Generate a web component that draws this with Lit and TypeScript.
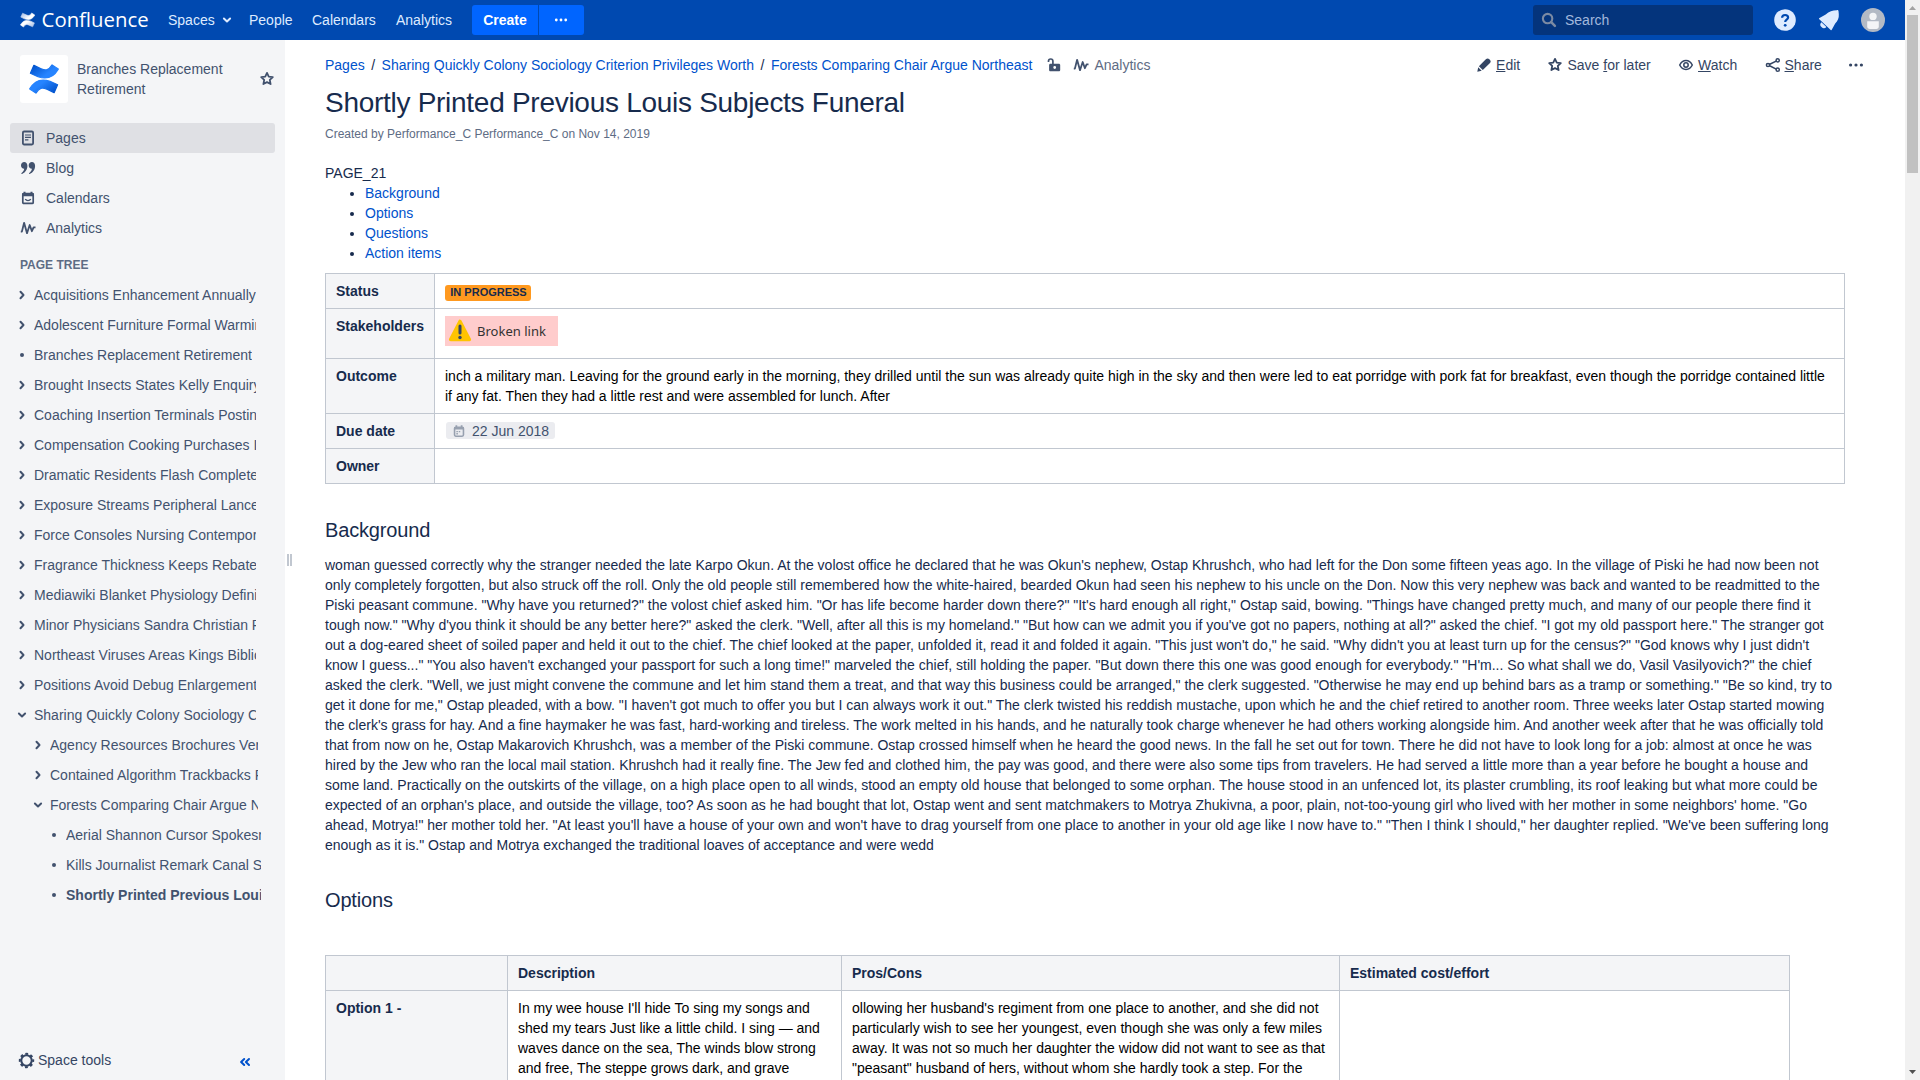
import { LitElement, html, css, svg, nothing } from "lit";
import { customElement } from "lit/decorators.js";

const ICONS: Record<string, unknown> = {
  star: svg`<path d="M8 1.9l1.75 3.75 4.05.5-3 2.8.8 4.1L8 11.1l-3.6 1.95.8-4.1-3-2.8 4.05-.5z" fill="none" stroke="currentColor" stroke-width="1.8" stroke-linejoin="round"/>`,
  dots: svg`<circle cx="2.6" cy="8" r="1.6"/><circle cx="8" cy="8" r="1.6"/><circle cx="13.4" cy="8" r="1.6"/>`,
  pages: svg`<rect x="2.9" y="1.5" width="10.2" height="13" rx="1.2" fill="none" stroke="currentColor" stroke-width="1.8"/><path d="M5 5h6M5 7.4h6M5 9.8h3.4" stroke="currentColor" stroke-width="1.2"/>`,
  blog: svg`<path d="M4.2 2C6 2 7.4 3.4 7.4 5.8c0 3.9-2.2 7-5.3 8.1-.6.2-1-.6-.5-1 1.5-1.1 2.4-2.4 2.6-4.1A3.2 3.2 0 0 1 1 5.3C1 3.4 2.4 2 4.2 2zM11.9 2c1.8 0 3.2 1.4 3.2 3.8 0 3.9-2.2 7-5.3 8.1-.6.2-1-.6-.5-1 1.5-1.1 2.4-2.4 2.6-4.1a3.2 3.2 0 0 1-3.2-3.5C8.7 3.4 10.1 2 11.9 2z"/>`,
  calendar: svg`<rect x="2.8" y="3.6" width="10.4" height="9.8" rx="1" fill="none" stroke="currentColor" stroke-width="1.7"/><path d="M2.3 3h11.4v3.3H2.3zM3.5 1.8h2v2h-2zM10.5 1.8h2v2h-2z"/><path d="M5.200 9.200c1.400 1.900 4.200 1.900 5.600 0" fill="none" stroke="currentColor" stroke-width="1.3"/>`,
  analytics: svg`<path d="M.8 11.600h1.100L4.100 2.800l2.900 10.400 2.700-8.200 2.200 6.200 1.700-3.900h1.900" fill="none" stroke="currentColor" stroke-width="1.800" stroke-linejoin="round"/>`,
  edit: svg`<path d="M2.900 9.200l7.200-7.100c.9-.9 2.100-.9 3 0l.9.9c.9.9.9 2.100 0 3l-7.200 7.100zM2.200 10.300l3.500 3.500-4.400 1z"/>`,
  watch: svg`<path d="M1.7 8c1.5-3 3.7-4.5 6.300-4.500S12.800 5 14.300 8c-1.500 3-3.700 4.500-6.300 4.500S3.200 11 1.700 8z" fill="none" stroke="currentColor" stroke-width="1.5" stroke-linejoin="round"/><circle cx="8" cy="8" r="2.2" fill="none" stroke="currentColor" stroke-width="1.5"/>`,
  share: svg`<path d="M3.2 8l9-4.4M3.2 8l9 4.6" stroke="currentColor" stroke-width="1.6"/><g fill="#fff" stroke="currentColor" stroke-width="1.5"><circle cx="3" cy="8" r="1.6"/><circle cx="12.7" cy="3.3" r="1.6"/><circle cx="12.7" cy="12.7" r="1.6"/></g>`,
  unlock: svg`<path fill-rule="evenodd" d="M4.500 6.800h8.300c.8 0 1.400.6 1.400 1.400v4.700c0 .8-.6 1.400-1.400 1.400H4.500c-.8 0-1.400-.6-1.400-1.400V8.200c0-.8.6-1.400 1.400-1.400zM8.700 9.100a1.400 1.400 0 1 0 0 2.800 1.400 1.400 0 0 0 0-2.800z"/><path d="M2.500 5.100V4.200C2.500 2.900 3.400 2 4.700 2s2.200.9 2.200 2.200v3" fill="none" stroke="currentColor" stroke-width="1.700"/>`,
  gear: svg`<circle cx="8" cy="8" r="4.900" fill="none" stroke="currentColor" stroke-width="1.900"/><circle cx="8" cy="8" r="6.300" fill="none" stroke="currentColor" stroke-width="1.900" stroke-dasharray="2.600 2.348" stroke-dashoffset="1.300"/>`,
  right: svg`<path d="M6.500 4.800L9.500 8l-3 3.200" fill="none" stroke="currentColor" stroke-width="2" stroke-linecap="round" stroke-linejoin="round"/>`,
  down: svg`<path d="M4.900 6.500L8 9.500l3.100-3" fill="none" stroke="currentColor" stroke-width="2" stroke-linecap="round" stroke-linejoin="round"/>`,
  bullet: svg`<circle cx="8" cy="8" r="2"/>`,
  collapse: svg`<path d="M7.200 5L4.100 8l3.100 3M12 5L8.900 8l3.100 3" fill="none" stroke="currentColor" stroke-width="2" stroke-linejoin="round" stroke-linecap="round"/>`,
  search: svg`<circle cx="6.600" cy="6.600" r="4.700" fill="none" stroke="currentColor" stroke-width="2.100"/><path d="M10.200 10.200l3.700 3.700" stroke="currentColor" stroke-width="2.500" stroke-linecap="round"/>`,
  date: svg`<rect x="2.900" y="3.700" width="10.200" height="10.200" rx="1.500" fill="none" stroke="currentColor" stroke-width="1.800"/><path d="M2.500 3.500h11v2.800h-11zM4 1.500h2v3H4zM10 1.500h2v3h-2zM5 8h1.700v1.500H5zM7.700 8h1.700v1.500H7.700zM5 10.400h1.700V12H5z"/>`,
};

const icon = (name: string, size = 16) =>
  html`<svg class="icon" width=${size} height=${size} viewBox="0 0 16 16" fill="currentColor" aria-hidden="true">${ICONS[name]}</svg>`;

/* One blade of the logo, drawn around the mark's centre; the other is its half-turn. */
const WAVE =
  "M-14.300 9.900L-8.100 14.100C-4.600 8.700-2 8.100 2.900 10.300L10.100 13.700 13.600 5.800 6 2.300C-3.400-1-9.400 1.500-14.300 9.900z";

const mark = (cls: string, box: string, from: string, to: string, id: string) => html`
  <svg class=${cls} viewBox=${box} aria-hidden="true">
    <defs>
      <linearGradient id=${id} x1="1" y1=".8" x2=".35" y2=".4">
        <stop offset="0" stop-color=${from}/><stop offset="1" stop-color=${to}/>
      </linearGradient>
    </defs>
    <g fill="url(#${id})" stroke="url(#${id})" stroke-width="1.200" stroke-linejoin="round">
      <path d=${WAVE}/><path d=${WAVE} transform="rotate(180)"/>
    </g>
  </svg>`;

const baseStyles = css`
  :host, * { box-sizing: border-box; }
  .icon { display: block; flex: none; overflow: visible; }
`;

@customElement("top-nav")
class TopNav extends LitElement {
  static styles = [
    baseStyles,
    css`
      :host { display: flex; align-items: center; height: 40px; padding-left: 19px; padding-right: 20px; background: #0049b0; color: #deebff; }
      .brand { display: flex; align-items: center; width: 149px; }
      .mark { width: 17px; height: 17px; display: block; }
      .word { width: 110px; height: 30px; display: block; margin-left: 5px; }
      .word text { font: 20px "Open Sans", "Noto Sans", sans-serif; fill: #fff; }
      .links { display: flex; }
      .link { display: flex; align-items: center; line-height: 20px; }
      .spaces { width: 81px; gap: 4px; }
      .people { width: 63px; }
      .calendars { width: 84px; }
      .analytics { width: 76px; }
      .create { display: flex; gap: 1px; color: #fff; font-weight: 700; }
      .btn { display: flex; align-items: center; justify-content: center; height: 30px; background: #0065ff; }
      .main { width: 66px; border-radius: 3px 0 0 3px; }
      .more { width: 45px; border-radius: 0 3px 3px 0; padding-right: 1px; }
      .search { display: flex; align-items: center; width: 220px; height: 30px; margin-left: auto; padding-left: 8px; gap: 8px; background: #04347c; border-radius: 3px; color: #a2b8dc; }
      .search .icon { color: #7b8aa3; }
      .tools { display: flex; align-items: center; margin-left: 21px; }
      .tools svg { display: block; }
      .help { margin-right: 21px; }
      .bell { margin-right: 20px; }
    `,
  ];
  render() {
    return html`
      <div class="brand">
        ${mark("mark", "-17.200 -16 34 34", "#a9c0e6", "#ffffff", "navg")}
        <svg class="word" viewBox="0 0 110 30"><text x=".6" y="22" textLength="107" lengthAdjust="spacingAndGlyphs">Confluence</text></svg>
      </div>
      <nav class="links">
        <span class="link spaces">Spaces ${icon("down", 16)}</span>
        <span class="link people">People</span>
        <span class="link calendars">Calendars</span>
        <span class="link analytics">Analytics</span>
      </nav>
      <div class="create"><span class="btn main">Create</span><span class="btn more">${icon("dots", 14)}</span></div>
      <div class="search">${icon("search")}<span>Search</span></div>
      <div class="tools">
        <svg class="help" width="22" height="22" viewBox="0 0 22 22"><circle cx="11" cy="11" r="10.800" fill="#deebff"/><path d="M8.100 8.800c0-1.700 1.200-2.800 3-2.800s3 1.100 3 2.600c0 2.100-2.900 2.200-2.900 4.400" fill="none" stroke="#0049b0" stroke-width="2.200"/><circle cx="11.200" cy="16.300" r="1.400" fill="#0049b0"/></svg>
        <svg class="bell" width="24" height="24" viewBox="0 0 24 24" fill="#deebff"><path d="M19.800 2.300c.8-.5 1.500-.2 1.700.6l.3 3.300c.3 3.800-1 6.500-3.600 9.200l-3.300 6.200c-.3.6-.8.7-1.200.3L2.300 11.200c-.5-.5-.4-1 .2-1.300l6.200-3.400c3.500-3 6.700-4.200 11.100-4.200z"/><path d="M4.400 14.200l5 4.800a3 3 0 1 1-5-4.800z"/></svg>
        <svg width="24" height="24" viewBox="0 0 24 24"><circle cx="12" cy="12" r="12" fill="#b3bac5"/><circle cx="12" cy="8.400" r="3.700" fill="#f4f5f7"/><path d="M6.200 13.200h11.600v5.300c0 1.500-1 2.500-2.500 2.500H8.700c-1.500 0-2.500-1-2.500-2.500z" fill="#f4f5f7"/></svg>
      </div>`;
  }
}

interface TreeNode { label: string; kind: "right" | "down" | "bullet"; level: number; current?: boolean }

const TREE: TreeNode[] = [
  { label: "Acquisitions Enhancement Annually", kind: "right", level: 0 },
  { label: "Adolescent Furniture Formal Warming", kind: "right", level: 0 },
  { label: "Branches Replacement Retirement", kind: "bullet", level: 0 },
  { label: "Brought Insects States Kelly Enquiry", kind: "right", level: 0 },
  { label: "Coaching Insertion Terminals Posting", kind: "right", level: 0 },
  { label: "Compensation Cooking Purchases In", kind: "right", level: 0 },
  { label: "Dramatic Residents Flash Complete", kind: "right", level: 0 },
  { label: "Exposure Streams Peripheral Lance", kind: "right", level: 0 },
  { label: "Force Consoles Nursing Contemporary", kind: "right", level: 0 },
  { label: "Fragrance Thickness Keeps Rebates", kind: "right", level: 0 },
  { label: "Mediawiki Blanket Physiology Defining", kind: "right", level: 0 },
  { label: "Minor Physicians Sandra Christian Pr", kind: "right", level: 0 },
  { label: "Northeast Viruses Areas Kings Biblio", kind: "right", level: 0 },
  { label: "Positions Avoid Debug Enlargement", kind: "right", level: 0 },
  { label: "Sharing Quickly Colony Sociology Criterion", kind: "down", level: 0 },
  { label: "Agency Resources Brochures Verify", kind: "right", level: 1 },
  { label: "Contained Algorithm Trackbacks Pr", kind: "right", level: 1 },
  { label: "Forests Comparing Chair Argue Northeast", kind: "down", level: 1 },
  { label: "Aerial Shannon Cursor Spokesman", kind: "bullet", level: 2 },
  { label: "Kills Journalist Remark Canal Street", kind: "bullet", level: 2 },
  { label: "Shortly Printed Previous Louis", kind: "bullet", level: 2, current: true },
];

@customElement("space-sidebar")
class SpaceSidebar extends LitElement {
  static styles = [
    baseStyles,
    css`
      :host { display: flex; flex-direction: column; width: 285px; background: #f4f5f7; color: #42526e; padding: 15px 10px 10px; line-height: 20px; }
      .space { display: flex; align-items: center; height: 48px; padding-left: 10px; }
      .logo { width: 48px; height: 48px; background: #fff; border-radius: 3px; display: block; }
      .name { width: 160px; margin-left: 9px; margin-right: 22px; }
      .nav { display: flex; flex-direction: column; margin-top: 20px; }
      .item { display: flex; align-items: center; gap: 10px; height: 30px; padding-left: 10px; border-radius: 3px; }
      .on { background: #dfe0e4; }
      .head { margin: 12px 0 0 10px; font-size: 12px; font-weight: 700; color: #5e6c84; }
      .tree { display: flex; flex-direction: column; margin-top: 5px; padding-left: 4px; }
      .row { display: flex; align-items: center; height: 30px; gap: 4px; overflow: hidden; width: 242px; white-space: nowrap; }
      .l1 { padding-left: 16px; width: 244px; }
      .l2 { padding-left: 32px; width: 247px; }
      .row span { overflow: hidden; }
      .now { font-weight: 700; }
      .foot { display: flex; align-items: center; margin-top: auto; padding-left: 8px; color: #344563; }
      .foot span { margin-left: 3px; }
      .foot .icon:last-child { color: #0052cc; margin: 3px 22px 0 auto; }
    `,
  ];
  render() {
    return html`
      <div class="space">
        ${mark("logo", "-24 -24 48 48", "#0052cc", "#2684ff", "spg")}
        <span class="name">Branches Replacement Retirement</span>
        ${icon("star")}
      </div>
      <nav class="nav">
        ${[["pages", "Pages"], ["blog", "Blog"], ["calendar", "Calendars"], ["analytics", "Analytics"]].map(
          ([i, t], n) => html`<span class="item ${n === 0 ? "on" : ""}">${icon(i)}${t}</span>`
        )}
      </nav>
      <div class="head">PAGE TREE</div>
      <div class="tree">
        ${TREE.map((n) => html`<div class="row l${n.level} ${n.current ? "now" : ""}">${icon(n.kind)}<span>${n.label}</span></div>`)}
      </div>
      <div class="foot">${icon("gear", 17)}<span>Space tools</span>${icon("collapse")}</div>`;
  }
}

const STORY = `woman guessed correctly why the stranger needed the late Karpo Okun. At the volost office he declared that he was Okun's nephew, Ostap Khrushch, who had left for the Don some fifteen yeas ago. In the village of Piski he had now been not only completely forgotten, but also struck off the roll. Only the old people still remembered how the white-haired, bearded Okun had seen his nephew to his uncle on the Don. Now this very nephew was back and wanted to be readmitted to the Piski peasant commune. "Why have you returned?" the volost chief asked him. "Or has life become harder down there?" "It's hard enough all right," Ostap said, bowing. "Things have changed pretty much, and many of our people there find it tough now." "Why d'you think it should be any better here?" asked the clerk. "Well, after all this is my homeland." "But how can we admit you if you've got no papers, nothing at all?" asked the chief. "I got my old passport here." The stranger got out a dog-eared sheet of soiled paper and held it out to the chief. The chief looked at the paper, unfolded it, read it and folded it again. "This just won't do," he said. "Why didn't you at least turn up for the census?" "God knows why I just didn't know I guess..." "You also haven't exchanged your passport for such a long time!" marveled the chief, still holding the paper. "But down there this one was good enough for everybody." "H'm... So what shall we do, Vasil Vasilyovich?" the chief asked the clerk. "Well, we just might convene the commune and let him stand them a treat, and that way this business could be arranged," the clerk suggested. "Otherwise he may end up behind bars as a tramp or something." "Be so kind, try to get it done for me," Ostap pleaded, with a bow. "I haven't got much to offer you but I can always work it out." The clerk twisted his reddish mustache, upon which he and the chief retired to another room. Three weeks later Ostap started mowing the clerk's grass for hay. And a fine haymaker he was fast, hard-working and tireless. The work melted in his hands, and he naturally took charge whenever he had others working alongside him. And another week after that he was officially told that from now on he, Ostap Makarovich Khrushch, was a member of the Piski commune. Ostap crossed himself when he heard the good news. In the fall he set out for town. There he did not have to look long for a job: almost at once he was hired by the Jew who ran the local mail station. Khrushch had it really fine. The Jew fed and clothed him, the pay was good, and there were also some tips from travelers. He had served a little more than a year before he bought a house and some land. Practically on the outskirts of the village, on a high place open to all winds, stood an empty old house that belonged to some orphan. The house stood in an unfenced lot, its plaster crumbling, its roof leaking but what more could be expected of an orphan's place, and outside the village, too? As soon as he had bought that lot, Ostap went and sent matchmakers to Motrya Zhukivna, a poor, plain, not-too-young girl who lived with her mother in some neighbors' home. "Go ahead, Motrya!" her mother told her. "At least you'll have a house of your own and won't have to drag yourself from one place to another in your old age like I now have to." "Then I think I should," her daughter replied. "We've been suffering long enough as it is." Ostap and Motrya exchanged the traditional loaves of acceptance and were wedd`;

@customElement("page-content")
class PageContent extends LitElement {
  static styles = [
    baseStyles,
    css`
      :host { display: block; flex: 1; min-width: 0; padding: 15px 60px 0 32px; background: #fff; color: #172b4d; line-height: 20px; overflow: hidden; }
      .bar { display: flex; align-items: center; height: 20px; margin-right: -19px; white-space: nowrap; }
      .crumbs { display: flex; }
      .crumbs i { font-style: normal; padding: 0 6.500px; }
      .link { color: #0052cc; }
      .lock { margin-left: 14px; color: #42526e; }
      .stats { display: flex; align-items: center; gap: 5px; margin-left: 11px; color: #5e6c84; }
      .stats .icon { color: #42526e; }
      .actions { display: flex; margin-left: auto; gap: 27.300px; color: #344563; }
      .act { display: flex; align-items: center; gap: 4px; }
      .act:last-child { margin-left: -1.200px; }
      u { text-decoration: underline; }
      .title { margin: 12px 0 0; font-size: 28px; line-height: 32px; font-weight: 400; letter-spacing: -.01em; }
      .meta { margin-top: 5px; font-size: 12px; color: #5e6c84; }
      .first { margin-top: 19px; }
      .toc { margin: 0; padding-left: 40px; }
      .head { margin: 0; font-size: 20px; line-height: 24px; font-weight: 400; letter-spacing: -.008em; }
      .bg { margin: 34px 0 13px; }
      .opt { margin: 33px 0 43px; }
      .story { margin: 0; }
      table { border-collapse: collapse; table-layout: fixed; }
      th, td { border: 1px solid #c1c7d0; padding: 7px 10px; text-align: left; vertical-align: top; font-weight: 400; }
      th { background: #f4f5f7; font-weight: 700; }
      td { color: #000; height: 35px; }
      .info { width: 1520px; margin-top: 10px; }
      .info .k { width: 109px; }
      .choices { width: 1465px; }
      .c1 { width: 182px; }
      .c2 { width: 334px; }
      .c3 { width: 498px; }
      .lozenge { display: block; width: 86px; height: 16px; margin-top: 4px; padding-left: 1px; background: #ff991f; border-radius: 3px; color: #172b4d; font-size: 11px; font-weight: 700; line-height: 15px; text-align: center; white-space: nowrap; }
      .broken { display: block; margin-bottom: 5px; }
      .broken text { font: 13px "Noto Sans", "Open Sans", sans-serif; fill: #333; }
      .date { display: flex; align-items: center; width: 109px; height: 17px; margin: 1px 0 2px 1px; padding-left: 6px; gap: 6px; background: #ebecf0; border-radius: 3px; color: #42526e; white-space: nowrap; }
      .date .icon { color: #97a0af; }
    `,
  ];
  render() {
    return html`
      <div class="bar">
        <div class="crumbs"><span class="link">Pages</span><i>/</i><span class="link">Sharing Quickly Colony Sociology Criterion Privileges Worth</span><i>/</i><span class="link">Forests Comparing Chair Argue Northeast</span></div>
        <span class="lock">${icon("unlock")}</span>
        <span class="stats">${icon("analytics")}Analytics</span>
        <div class="actions">
          <span class="act">${icon("edit")}<span><u>E</u>dit</span></span>
          <span class="act">${icon("star")}<span>Save <u>f</u>or later</span></span>
          <span class="act">${icon("watch")}<span><u>W</u>atch</span></span>
          <span class="act">${icon("share")}<span><u>S</u>hare</span></span>
          <span class="act">${icon("dots")}</span>
        </div>
      </div>
      <h1 class="title">Shortly Printed Previous Louis Subjects Funeral</h1>
      <div class="meta">Created by Performance_C Performance_C on Nov 14, 2019</div>
      <div class="first">PAGE_21</div>
      <ul class="toc">
        ${["Background", "Options", "Questions", "Action items"].map((t) => html`<li><span class="link">${t}</span></li>`)}
      </ul>
      <table class="info">
        <tbody>
          <tr><th class="k">Status</th><td><span class="lozenge">IN PROGRESS</span></td></tr>
          <tr><th>Stakeholders</th><td>
            <svg class="broken" width="113" height="30" viewBox="0 0 113 30">
              <rect width="113" height="30" fill="#fcc"/>
              <path d="M15 5.500L24.300 23.500H5.700z" fill="#ffc400" stroke="#ffc400" stroke-width="3.600" stroke-linejoin="round"/>
              <path d="M15 10v7" stroke="#344563" stroke-width="3" stroke-linecap="round"/><circle cx="15" cy="21.500" r="1.700" fill="#344563"/>
              <text x="32" y="20" textLength="69">Broken link</text>
            </svg></td></tr>
          <tr><th>Outcome</th><td>inch a military man. Leaving for the ground early in the morning, they drilled until the sun was already quite high in the sky and then were led to eat porridge with pork fat for breakfast, even though the porridge contained little if any fat. Then they had a little rest and were assembled for lunch. After</td></tr>
          <tr><th>Due date</th><td><span class="date">${icon("date", 14)}22 Jun 2018</span></td></tr>
          <tr><th>Owner</th><td>${nothing}</td></tr>
        </tbody>
      </table>
      <h2 class="head bg">Background</h2>
      <p class="story">${STORY}</p>
      <h2 class="head opt">Options</h2>
      <table class="choices">
        <tbody>
          <tr><th class="c1"></th><th class="c2">Description</th><th class="c3">Pros/Cons</th><th>Estimated cost/effort</th></tr>
          <tr>
            <th>Option 1 -</th>
            <td>In my wee house I'll hide To sing my songs and shed my tears Just like a little child. I sing — and waves dance on the sea, The winds blow strong and free, The steppe grows dark, and grave</td>
            <td>ollowing her husband's regiment from one place to another, and she did not particularly wish to see her youngest, even though she was only a few miles away. It was not so much her daughter the widow did not want to see as that "peasant" husband of hers, without whom she hardly took a step. For the</td>
            <td></td>
          </tr>
        </tbody>
      </table>`;
  }
}

@customElement("app-root")
class AppRoot extends LitElement {
  static styles = [
    baseStyles,
    css`
      :host { display: flex; width: 1920px; height: 1080px; overflow: hidden; background: #fff; font: 14px/20px "Liberation Sans", Arial, sans-serif; }
      .page { display: flex; flex-direction: column; width: 1905px; height: 1080px; overflow: hidden; }
      .body { display: flex; flex: 1; min-height: 0; }
      .split { display: flex; gap: 1px; align-items: center; width: 8px; padding-left: 2px; background: #fff; }
      .split i { width: 2px; height: 12px; background: #c1c7d0; }
      .scroll { display: flex; flex-direction: column; align-items: center; width: 15px; height: 1080px; background: #f1f1f1; }
      .scroll svg { display: block; flex: none; }
      .thumb { width: 11px; height: 158px; background: #c1c1c1; margin-bottom: auto; }
    `,
  ];
  render() {
    return html`
      <div class="page">
        <top-nav></top-nav>
        <div class="body">
          <space-sidebar></space-sidebar>
          <div class="split"><i></i><i></i></div>
          <page-content></page-content>
        </div>
      </div>
      <div class="scroll">
        <svg width="15" height="15" viewBox="0 0 15 15"><path d="M4 10h7L7.500 6z" fill="#a3a3a3"/></svg>
        <div class="thumb"></div>
        <svg width="15" height="15" viewBox="0 0 15 15"><path d="M4 5h7L7.500 9z" fill="#505050"/></svg>
      </div>`;
  }
}
